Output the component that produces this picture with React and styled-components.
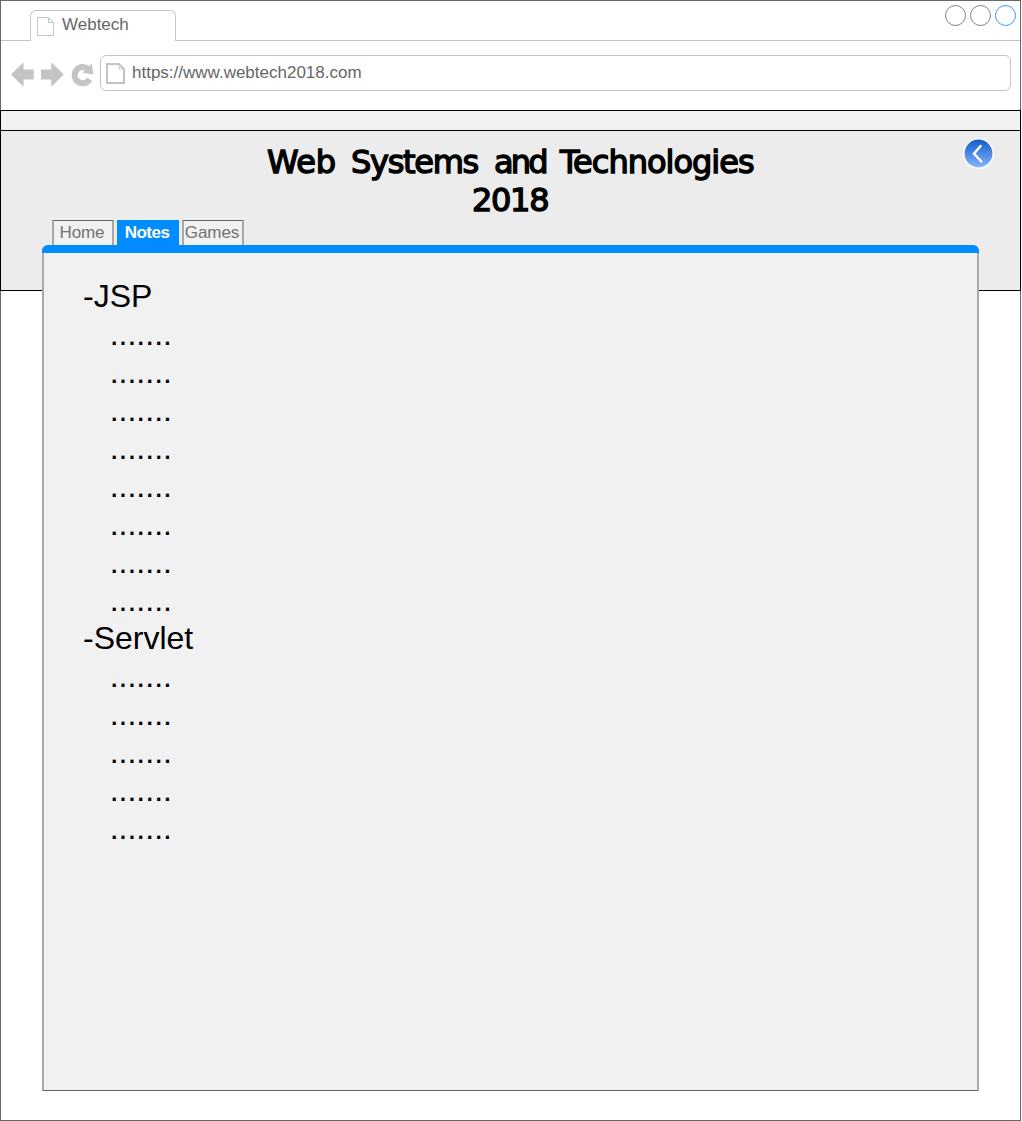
import React from "react";
import styled, { createGlobalStyle } from "styled-components";

const GlobalStyle = createGlobalStyle`
  * { box-sizing: border-box; }
  body { margin: 0; background: #fff; font-family: "Liberation Sans", Arial, sans-serif; }
`;

const Window = styled.div`
  width: 1021px;
  height: 1121px;
  border: 1px solid #666;
  background: #fff;
`;

const TabStrip = styled.div`
  display: flex;
  justify-content: space-between;
  height: 40px;
  padding: 4px 4px 0 29px;
  border-bottom: 1px solid #c4c4c4;
`;

const BrowserTab = styled.div`
  display: flex;
  width: 146px;
  height: 31px;
  margin-top: 5px;
  padding: 6px 0 0 6px;
  gap: 8px;
  border: 1px solid #c4c4c4;
  border-bottom: 0;
  border-radius: 6px 6px 0 0;
  background: #fff;
  color: #666;
  font-size: 17px;
  line-height: 19px;

  span { margin-top: -2px; }
`;

const WindowButtons = styled.div`
  display: flex;
  gap: 4px;
`;

const WindowButton = styled.div`
  width: 21px;
  height: 21px;
  border: 1px solid ${(p) => p.$color};
  border-radius: 50%;
`;

const Toolbar = styled.div`
  display: flex;
  height: 69px;
  padding: 14px 9px 0 10px;
`;

const NavIcons = styled.svg`
  width: 84px;
  height: 30px;
  margin: 5px 5px 0 0;
  fill: #c4c4c4;
`;

const AddressBar = styled.div`
  display: flex;
  flex: 1;
  height: 36px;
  padding: 7px 0 0 5px;
  gap: 7px;
  border: 1px solid #c4c4c4;
  border-radius: 6px;
  color: #666;
  font-size: 17px;
  line-height: 20px;
`;

const PageStrip = styled.div`
  height: 20px;
  margin: 0 -1px;
  border: 1px solid #000;
  border-bottom: 0;
  background: #f1f1f1;
`;

const Header = styled.header`
  display: grid;
  grid-template-columns: 1fr 508px 1fr;
  align-items: start;
  height: 161px;
  margin: 0 -1px;
  border: 1px solid #000;
  background: #ececec;
`;

const Title = styled.h1`
  grid-column: 2;
  margin: 12px 0 0;
  color: #000;
  font: 400 32px/38px "Comic Sans MS", "DejaVu Sans", sans-serif;
  -webkit-text-stroke: 1.4px #000;
  stroke-linejoin: round;
`;

const TitleLine = styled.span`
  display: flex;
  justify-content: center;
  gap: 14px;
`;

const Word = styled.span`
  width: ${(p) => p.$width}px;
  letter-spacing: ${(p) => p.$spacing}px;
  white-space: nowrap;
`;

const BackButton = styled.svg`
  justify-self: end;
  width: 32px;
  height: 32px;
  margin: 6px 25px 0 0;
`;

const Content = styled.main`
  width: 937px;
  margin: -71px 0 0 41px;
  position: relative;
`;

const PageTabs = styled.nav`
  display: flex;
  gap: 3px;
  height: 25px;
  padding-left: 10px;
`;

const PageTab = styled.div`
  width: 62px;
  height: 25px;
  padding-right: 2px;
  border: solid ${(p) => (p.$active ? "#008cff" : "#a8a8a8")};
  border-width: 1px 2px 0;
  border-top-color: ${(p) => (p.$active ? "#008cff" : "#666")};
  background: ${(p) => (p.$active ? "#008cff" : "#f1f1f1")};
  color: ${(p) => (p.$active ? "#fff" : "#737373")};
  font-size: 17px;
  font-weight: ${(p) => (p.$active ? 700 : 400)};
  letter-spacing: ${(p) => (p.$active ? -0.5 : -0.1)}px;
  line-height: 23px;
  display: flex;
  justify-content: center;
`;

const Panel = styled.section`
  height: 846px;
  border: solid #aaa;
  border-width: 0 2px 1px;
  border-bottom-color: #666;
  border-radius: 6px 6px 0 0;
  background: #f1f1f1;
`;

const PanelBar = styled.div`
  height: 8px;
  margin: 0 -2px;
  border-radius: 6px 6px 0 0;
  background: #008cff;
`;

const Notes = styled.div`
  padding: 24px 0 0 39px;
  color: #000;
  font-size: 32px;
  line-height: 38px;
`;

const NoteLine = styled.div`
  padding-left: ${(p) => (p.$indent ? 26.7 : 0)}px;
`;

function PageIcon({ width, height, stroke }) {
  const w = width - stroke / 2;
  const h = height - stroke / 2;
  const s = stroke / 2;
  const fold = 5;
  return (
    <svg width={width} height={height} fill="none" stroke="#c4c4c4" strokeWidth={stroke}>
      <path d={`M${s} ${s}H${w - fold}L${w} ${s + fold}V${h}H${s}Z`} />
      <path d={`M${w - fold} ${s}V${s + fold}H${w}`} strokeWidth="1" />
    </svg>
  );
}

const sections = [
  { name: "-JSP", count: 8 },
  { name: "-Servlet", count: 5 },
];

export default function App() {
  return (
    <>
      <GlobalStyle />
      <Window>
        <TabStrip>
          <BrowserTab>
            <PageIcon width={17} height={19} stroke={1} />
            <span>Webtech</span>
          </BrowserTab>
          <WindowButtons>
            <WindowButton $color="#808080" />
            <WindowButton $color="#808080" />
            <WindowButton $color="#3399ff" />
          </WindowButtons>
        </TabStrip>
        <Toolbar>
          <NavIcons viewBox="11 60 84 30">
            <path d="M11 74.5L23.5 62.3V69.5H33.7V79.5H23.5V86.7Z" />
            <path d="M63.8 74.5L51.3 62.3V69.5H41V79.5H51.3V86.7Z" />
            <path
              d="M89.8 79.4A8.2 8.2 0 1 1 88.2 68.9"
              fill="none"
              stroke="#c4c4c4"
              strokeWidth="6"
            />
            <path d="M91.8 63.4L93.4 74.4L82.6 72.6Z" />
          </NavIcons>
          <AddressBar>
            <PageIcon width={19} height={21} stroke={2} />
            <span>https://www.webtech2018.com</span>
          </AddressBar>
        </Toolbar>
        <PageStrip />
        <Header>
          <Title>
            <TitleLine>
              <Word $width={70} $spacing={-0.4}>Web</Word>
              <Word $width={129} $spacing={-1.3}>Systems</Word>
              <Word $width={52} $spacing={-2.8}>and</Word>
              <Word $width={194} $spacing={-1}>Technologies</Word>
            </TitleLine>
            <TitleLine>
              <Word $width={77} $spacing={-1.3}>2018</Word>
            </TitleLine>
          </Title>
          <BackButton viewBox="0 0 32 32">
            <defs>
              <linearGradient id="backFill" x1="0" y1="0" x2="0" y2="1">
                <stop offset="0" stopColor="#1259c8" />
                <stop offset="1" stopColor="#86b8ff" />
              </linearGradient>
            </defs>
            <circle cx="15.5" cy="16.5" r="14.7" fill="url(#backFill)" stroke="#fff" strokeWidth="1.5" />
            <path
              d="M17.5 9L11 16.7L18.3 24.5"
              fill="none"
              stroke="#fff"
              strokeWidth="2.5"
              strokeLinecap="round"
            />
          </BackButton>
        </Header>
        <Content>
          <PageTabs>
            <PageTab>Home</PageTab>
            <PageTab $active>Notes</PageTab>
            <PageTab>Games</PageTab>
          </PageTabs>
          <Panel>
            <PanelBar />
            <Notes>
              {sections.map(({ name, count }) => (
                <React.Fragment key={name}>
                  <NoteLine>{name}</NoteLine>
                  {Array.from({ length: count }, (_, i) => (
                    <NoteLine key={i} $indent>.......</NoteLine>
                  ))}
                </React.Fragment>
              ))}
            </Notes>
          </Panel>
        </Content>
      </Window>
    </>
  );
}
